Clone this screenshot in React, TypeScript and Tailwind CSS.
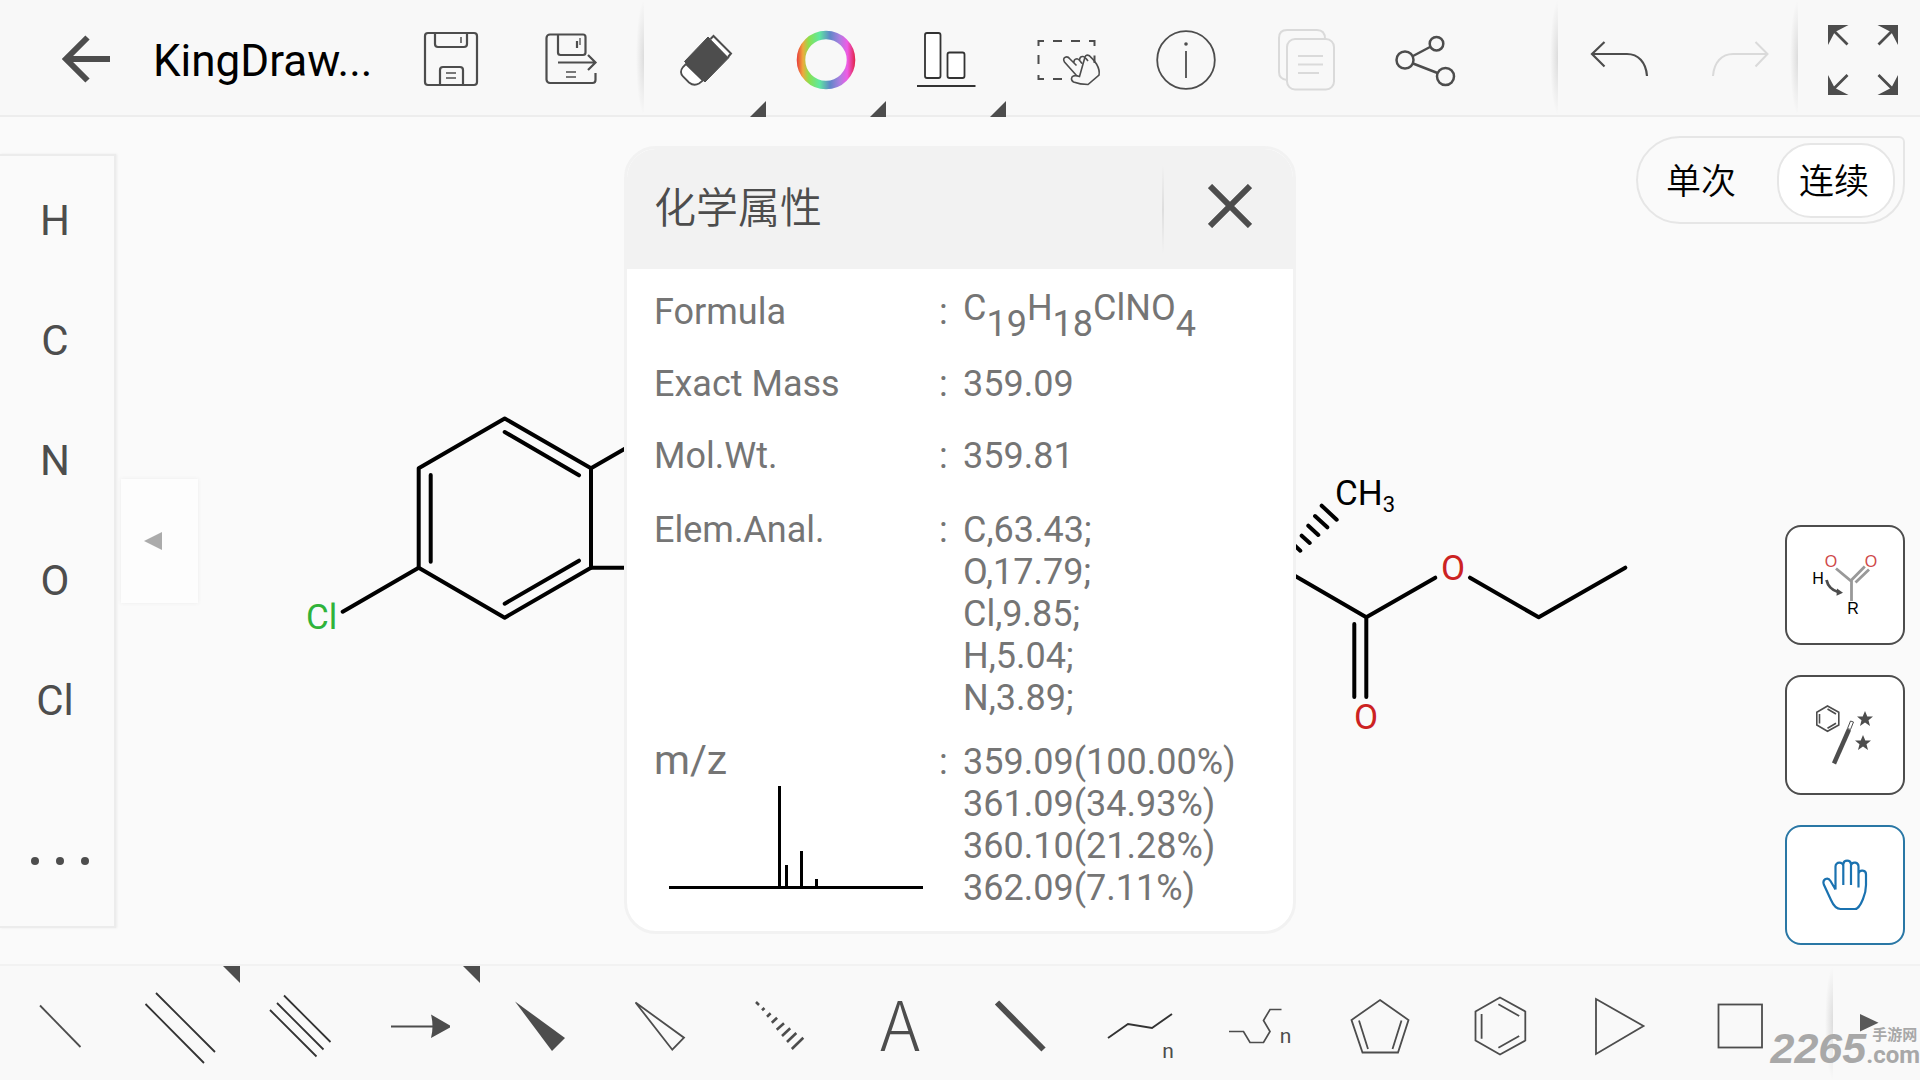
import type { ReactNode } from 'react';

type Tool = { id: string; label: string; icon: ReactNode; more?: boolean; disabled?: boolean };

const elements = ['H', 'C', 'N', 'O', 'Cl'];
const elemAnal = ['C,63.43;', 'O,17.79;', 'Cl,9.85;', 'H,5.04;', 'N,3.89;'];
const mzValues = ['359.09(100.00%)', '361.09(34.93%)', '360.10(21.28%)', '362.09(7.11%)'];

const star = '0,-8 2.3,-2.5 8,-2.5 3.5,1.2 5,7 0,3.500 -5,7 -3.5,1.2 -8,-2.5 -2.3,-2.5';

const fileTools: Tool[] = [
  {
    id: 'save', label: 'Save', icon: (
      <g strokeWidth="2.2">
        <rect x="35" y="33" width="52" height="52" rx="3" />
        <path d="M45 33v11a3 3 0 0 0 3 3h26a3 3 0 0 0 3-3V33M50 85V70a3 3 0 0 1 3-3h17a3 3 0 0 1 3 3v15" />
        <path d="M71 37v6M56 73h10M56 78h10" strokeWidth="1.5" />
      </g>
    ),
  },
  {
    id: 'save-as', label: 'Save as', icon: (
      <g strokeWidth="2.2">
        <path d="M85.500 73v7a3 3 0 0 1-3 3H40a3.500 3.500 0 0 1-3.500-3.500V38a3.500 3.500 0 0 1 3.500-3.500h33a2.500 2.500 0 0 1 2.500 2.500v15.500a2.500 2.500 0 0 1-2.500 2.500H50.500a2.500 2.500 0 0 1-2.500-2.500V34.500" />
        <path d="M48 62.500h37M78 55l7.500 7.500-7.500 7.500M67 41v7" />
        <path d="M70 38v7M56 72h10M56 77h10" strokeWidth="1.3" />
      </g>
    ),
  },
];

const editTools: Tool[] = [
  {
    id: 'eraser', label: 'Eraser', more: true, icon: (
      <g>
        <path d="M62 37l21 20.500-24 24.500-20.500-20.500z" fill="currentColor" />
        <path d="M64.500 39l3-3L85 53.500l-3 3.500" strokeWidth="2" fill="#fff" />
        <path d="M40 64l-3 3q-4 5 0 9.500l6 6q5 4 10 1l4-3z" strokeWidth="1.8" fill="#fff" />
      </g>
    ),
  },
  {
    id: 'color', label: 'Color', more: true, icon: (
      <g>
        <defs>
          <linearGradient id="wheel" gradientUnits="userSpaceOnUse" x1="31" y1="0" x2="90" y2="0">
            <stop offset="0" stopColor="#e8413c" />
            <stop offset=".1" stopColor="#f0a83c" />
            <stop offset=".2" stopColor="#8be04e" />
            <stop offset=".38" stopColor="#5fe8a0" />
            <stop offset=".56" stopColor="#5f86c8" />
            <stop offset=".72" stopColor="#a97fe0" />
            <stop offset=".85" stopColor="#ef5ce6" />
            <stop offset="1" stopColor="#e02038" />
          </linearGradient>
        </defs>
        <circle cx="60" cy="60" r="25" stroke="url(#wheel)" strokeWidth="8.600" />
      </g>
    ),
  },
  {
    id: 'align', label: 'Align', more: true, icon: (
      <g stroke="#333" strokeWidth="1.8" fill="#fff">
        <rect x="39" y="33" width="15.500" height="45" rx="2" />
        <rect x="61.500" y="52.500" width="17" height="25.500" rx="2" />
        <path d="M31 86h58.500" strokeWidth="2" />
      </g>
    ),
  },
  {
    id: 'select', label: 'Select', icon: (
      <g strokeWidth="2">
        <path d="M32.500 46v-5H38M47 41h9M65 41h9M83 41h5.500v5M32.500 55v9M32.500 75v4H38M47 79h9M88.500 55.500V63" />
        <path d="M70.500 75.500L58.500 62q-2-3.500 .8-4.800 2.500-1 4.700 1.800l6.500 6.500M68 63q-.5-4 3-4.300 2 .2 5 5M73.500 60q.5-4 3.500-3.500 2 .3 5 4.500M79 57q1-3 4.500-1.200 4.500 4 7 8.200 3.500 6 2.500 11L82 84.500q-8 0-14.500-2.500-3-2-1.500-5 2-2.500 7.500-.5z" strokeWidth="1.600" />
      </g>
    ),
  },
  {
    id: 'info', label: 'Properties', icon: (
      <g strokeWidth="1.800">
        <circle cx="60" cy="60" r="28.800" />
        <circle cx="60" cy="44" r="1.800" fill="currentColor" stroke="none" />
        <path d="M60 51v27" />
      </g>
    ),
  },
  {
    id: 'copy', label: 'Copy', disabled: true, icon: (
      <g strokeWidth="2">
        <path d="M41 80q-8-1-8-8V38q0-8 8-8h30q8 0 8 9" />
        <rect x="41" y="39" width="47" height="50.500" rx="8" />
        <path d="M52 56h25M52 64.500h25M52 73h21" />
      </g>
    ),
  },
  {
    id: 'share', label: 'Share', icon: (
      <g strokeWidth="2.500">
        <circle cx="39" cy="60" r="8.500" />
        <circle cx="70.500" cy="43.700" r="6.800" />
        <circle cx="79.500" cy="76.500" r="8.500" />
        <path d="M47 56l17-9M47 63.500l24.500 9.500" />
      </g>
    ),
  },
];

const historyTools: Tool[] = [
  { id: 'undo', label: 'Undo', icon: <path d="M87 76C86 62 78 54 67 54H32M44.500 42L32 54l12.500 12.500" strokeWidth="2.200" /> },
  { id: 'redo', label: 'Redo', disabled: true, icon: <path d="M33 76C34 62 42 54 53 54h34.500M75.500 42l12 12-12 12.500" strokeWidth="2" /> },
  {
    id: 'fullscreen', label: 'Full screen', icon: (
      <g strokeWidth="2.800">
        <path d="M34 31l13.500 13.500M92 31L78.500 44.500M34 88.500L47.500 75M92 88.500L78.500 75" />
        <path d="M28 25h20.500L36 31.500l-2 2L28 45zM98 25H77.500L90 31.500l2 2L98 45zM28 95h20.500L36 88.500l-2-2L28 75zM98 95H77.500L90 88.500l2-2L98 75z" fill="currentColor" stroke="none" />
      </g>
    ),
  },
];

const bondTools: Tool[] = [
  { id: 'single', label: 'Single bond', icon: <path d="M40 41.500l40.500 41.500" strokeWidth="1.800" /> },
  { id: 'double', label: 'Double bond', more: true, icon: <path d="M36 29l59 59M25.500 40L84 99" strokeWidth="1.800" stroke="#333" /> },
  { id: 'triple', label: 'Triple bond', icon: <path d="M44 31.500L90.500 78M37 39l46.500 46.500M30 46l46.500 46.500" strokeWidth="1.800" stroke="#333" /> },
  {
    id: 'arrow', label: 'Arrow', more: true, icon: (
      <g>
        <path d="M31 62.500h44" strokeWidth="2" />
        <path d="M71 50.500l19 11v2l-19 10.500q3-12 0-23.500z" fill="currentColor" />
      </g>
    ),
  },
  { id: 'wedge', label: 'Wedge bond', icon: <path d="M35 37.500l50 36.500-13 13z" fill="currentColor" /> },
  { id: 'hollow', label: 'Hollow wedge bond', icon: <path d="M35.500 38.500L84 73.700 72.300 85.700z" strokeWidth="1.800" /> },
  {
    id: 'hash', label: 'Hashed bond', icon: (
      <path d="M36 38l3 3M42 46.300l2.500-2.300M47 52.700l3.600-3.400M51.800 58.700l5.300-5M56.700 65.700l7.300-6.400M62 72l8.200-7.700M67 78l9.300-9M71.800 85l11.500-11.300" strokeWidth="2.600" />
    ),
  },
  {
    id: 'text', label: 'Text', icon: (
      <text x="60" y="87" textAnchor="middle" fontSize="68" fill="#4d4d4d" className="font-['Noto_Sans_CJK_SC',sans-serif] font-light">A</text>
    ),
  },
  { id: 'bold', label: 'Bold bond', icon: <path d="M37 38.500l46.500 47" strokeWidth="6" /> },
  {
    id: 'chain', label: 'Chain', icon: (
      <g>
        <path d="M28 74l20-14 24 4 20-14" strokeWidth="1.900" stroke="#333" />
        <text x="88" y="94" textAnchor="middle" fontSize="21" fill="currentColor">n</text>
      </g>
    ),
  },
  {
    id: 'polymer', label: 'Polymer chain', icon: (
      <g>
        <path d="M29 67.500h14.500L50 78.500h13.500L70 67.500l-6.500-11L70 45.500h11.500" strokeWidth="1.700" />
        <text x="85.500" y="79" textAnchor="middle" fontSize="21" fill="currentColor">n</text>
      </g>
    ),
  },
  { id: 'penta', label: 'Cyclopentadiene', icon: <path d="M60 36l28.500 20-10.500 32.500H42.500L31.500 56zM39 56.500l9 28.500M81.500 56.500l-9 28.500" strokeWidth="1.800" /> },
  { id: 'benzene', label: 'Benzene', icon: <path d="M60 33.500l25.300 14v29L60 90.500l-24.500-14v-29zM41.600 50v24.700M58.400 40.300L79.200 52M79.200 72L58.400 83.700" strokeWidth="1.800" /> },
  { id: 'triangle', label: 'Cyclopropane', icon: <path d="M36 35l47.500 27L36 90z" strokeWidth="1.800" /> },
  { id: 'square', label: 'Cyclobutane', icon: <rect x="38.500" y="40.500" width="43.500" height="43" strokeWidth="1.800" /> },
];

function Divider() {
  return (
    <span className="relative w-0">
      <span className="absolute inset-y-0 right-0.5 w-2 bg-[radial-gradient(ellipse_at_right,#dcdcdc,transparent_70%)]" />
    </span>
  );
}

function TopButton({ tool }: { tool: Tool }) {
  return (
    <button type="button" aria-label={tool.label} disabled={tool.disabled}
      className="h-[115px] w-[120px] shrink-0 text-[#4d4d4d] disabled:text-[#dadada]">
      <svg viewBox="0 0 120 115" fill="none" stroke="currentColor" className="h-full w-full overflow-visible">
        {tool.icon}
        {tool.more && <path d="M120 101v16h-16z" fill="currentColor" stroke="none" />}
      </svg>
    </button>
  );
}

function BondButton({ tool }: { tool: Tool }) {
  return (
    <button type="button" aria-label={tool.label} className="h-[114px] w-[120px] shrink-0 text-[#4d4d4d]">
      <svg viewBox="0 2 120 114" className="h-full w-full">
        <g fill="none" stroke="currentColor" className="[&_path[fill=currentColor]]:stroke-none [&_text]:stroke-none">{tool.icon}</g>
        {tool.more && <path d="M103 2h17v17z" fill="currentColor" />}
      </svg>
    </button>
  );
}

function Molecule() {
  return (
    <svg viewBox="0 117 1920 847" className="absolute inset-0 h-full w-full" aria-label="Molecule">
      <g fill="none" stroke="#000" strokeWidth="4" strokeLinecap="round" strokeLinejoin="round">
        <path d="M504.700 418.500L591 468.300v99.400l-86.300 50-86-50v-99.400z" />
        <path d="M504.700 432L579 475.300M579 560.700l-74.300 43M430.700 475v86.700" />
        <path d="M591 468.300L640 440M591 567.700h49M418.700 567.700l-76 44" />
        <path d="M1284 569.500l82.300 47.800 69-39.600M1366.300 617.300V697M1354.300 624v73" />
        <path d="M1470 577.700l68.700 39.600 86.600-49.600" />
        <path d="M1321.700 505.700l15 14M1315 516l12.300 11.300M1308.300 525.700l10 9.300M1301.700 535.700l8 7.300M1295 545.700l5.300 5" />
      </g>
      <g fontSize="35">
        <text x="306" y="629" fill="#2fb33a">Cl</text>
        <text x="1453" y="580" fill="#cc2222" textAnchor="middle">O</text>
        <text x="1366" y="729" fill="#cc2222" textAnchor="middle">O</text>
        <text x="1335" y="505">CH<tspan fontSize="22" dy="7">3</tspan></text>
      </g>
    </svg>
  );
}

function Row({ label, children }: { label: ReactNode; children: ReactNode }) {
  return (
    <div className="grid grid-cols-[285px_24px_1fr]">
      <dt>{label}</dt>
      <span>:</span>
      {children}
    </div>
  );
}

function PropertiesDialog() {
  return (
    <div className="absolute inset-0 flex items-center justify-center pb-0.5">
      <section role="dialog" aria-labelledby="dialog-title"
        className="w-[672px] max-w-full overflow-hidden rounded-[32px] border-[3px] border-[#f2f2f2] bg-white">
        <header className="flex h-[120px] items-center bg-[#f2f2f2] pl-[27px]">
          <h2 id="dialog-title" className="flex-1 text-[42px] leading-[60px] font-[350] text-[#4d4d4d]">化学属性</h2>
          <span className="h-[88px] w-0.5 bg-linear-to-b from-transparent via-[#dedede] to-transparent" />
          <button type="button" aria-label="Close" className="flex h-full w-[129px] items-center justify-center pb-1.5 pl-0.5 text-[#4d4d4d]">
            <svg viewBox="0 0 44 44" className="size-11">
              <path d="M2 2l40 40M42 2L2 42" stroke="currentColor" strokeWidth="6" />
            </svg>
          </button>
        </header>
        <dl className="flex flex-col px-[27px] py-[22px] text-[36px] leading-[42px] text-[#757575]">
          <div className="flex flex-col gap-[30px] pb-8">
            <Row label="Formula">
              <dd className="leading-[34px] whitespace-nowrap [&_sub]:-bottom-4 [&_sub]:text-[36px]">
                C<sub>19</sub>H<sub>18</sub>ClNO<sub>4</sub>
              </dd>
            </Row>
            <Row label="Exact Mass"><dd>359.09</dd></Row>
            <Row label="Mol.Wt."><dd>359.81</dd></Row>
          </div>
          <div className="flex flex-col gap-[22px]">
            <Row label="Elem.Anal.">
              <dd>{elemAnal.map(v => <p key={v}>{v}</p>)}</dd>
            </Row>
            <Row
              label={
                <>
                  <p className="pb-1 text-[41px] leading-[38px]">m/z</p>
                  <svg viewBox="0 0 280 108" className="w-[280px]" aria-label="Mass spectrum">
                    <path d="M15 104.500h254M125.500 3v101M132.500 82v22M147.500 68v36M162.500 96v8" stroke="#000" strokeWidth="3" />
                  </svg>
                </>
              }
            >
              <dd>{mzValues.map(v => <p key={v}>{v}</p>)}</dd>
            </Row>
          </div>
        </dl>
      </section>
    </div>
  );
}

function SideTools() {
  const box = 'size-[120px] rounded-2xl border-2 bg-white';
  return (
    <div className="flex flex-col gap-[30px]">
      <button type="button" aria-label="Reaction" className={`${box} border-[#4d4d4d] text-[#4d4d4d]`}>
        <svg viewBox="2 2 116 116" className="h-full w-full font-['Liberation_Sans',sans-serif]">
          <path d="M51 43.500l15.500 13v19.500M66 55.500l13.800-14M70.500 57.500l13.500-13" fill="none" stroke="#999" strokeWidth="2.800" />
          <path d="M41.500 55q2 9 11.500 12" fill="none" stroke="currentColor" strokeWidth="2.800" />
          <path d="M52 63.500l6 4.200-6.500 3z" fill="currentColor" />
          <g fontSize="16" textAnchor="middle">
            <text x="46" y="42" fill="#cf4a4a">O</text>
            <text x="86" y="42" fill="#cf4a4a">O</text>
            <text x="33" y="59" fill="#000">H</text>
            <text x="68" y="89" fill="#000">R</text>
          </g>
        </svg>
      </button>
      <button type="button" aria-label="Magic wand" className={`${box} border-[#4d4d4d] text-[#4d4d4d]`}>
        <svg viewBox="2 2 116 116" className="h-full w-full">
          <path d="M42.500 31l11.300 6.300V50l-11.300 6.300L31.800 50V37.300zM34.500 39v9.500M42.500 34l8.500 5M42.500 53.300l8.500-5" fill="none" stroke="currentColor" strokeWidth="1.600" />
          <path d="M49 88.500l15-34" stroke="currentColor" strokeWidth="4.500" />
          <path d="M62.500 53.500l3-7.500 3 1-3 7.500z" fill="#fff" stroke="currentColor" strokeWidth="1" />
          <polygon points={star} transform="translate(80 44)" fill="currentColor" />
          <polygon points={star} transform="translate(78 68)" fill="currentColor" />
        </svg>
      </button>
      <button type="button" aria-label="Move" aria-pressed="true" className={`${box} border-[#2a77a5] text-[#1a72b0]`}>
        <svg viewBox="2 2 116 116" className="h-full w-full">
          <path d="M50.500 64.500L45.500 56q-2-3.500-5-2-3 1.800-1.700 5.500L46 75q4 9 9.500 9H70q4 0 8-10 3-7 3-14V49.500a3.800 3.800 0 0 0-7.500-1V62.500M58.300 60V41.500a3.900 3.900 0 0 0-7.800 0v23M66 60V39a3.900 3.900 0 0 0-7.700 0v2.500M73.500 62V41.500A3.900 3.900 0 0 0 66 40" fill="none" stroke="currentColor" strokeWidth="2.200" strokeLinejoin="round" />
        </svg>
      </button>
    </div>
  );
}

export default function App() {
  return (
    <div className="flex min-h-screen flex-col overflow-hidden bg-[#fafafa] font-['Roboto','Noto_Sans_CJK_SC',sans-serif] text-black">
      {/* Top toolbar */}
      <header className="flex border-b-2 border-[#ededed] bg-[#f8f8f8]">
        <button type="button" aria-label="Back" className="h-[115px] w-[140px] shrink-0 text-[#4d4d4d]">
          <svg viewBox="0 0 140 115" fill="none" stroke="currentColor" strokeWidth="6" className="h-full w-full">
            <path d="M110 59H66M87.500 37.500L66 59l21.500 21.500" />
          </svg>
        </button>
        <h1 className="flex w-[250px] shrink-0 items-center pt-1.5 pl-[13px] text-[44px] leading-[60px]">KingDraw...</h1>
        {fileTools.map(t => <TopButton key={t.id} tool={t} />)}
        <span className="w-4" />
        <Divider />
        {editTools.map(t => <TopButton key={t.id} tool={t} />)}
        <span className="flex-1" />
        <Divider />
        {historyTools.slice(0, 2).map(t => <TopButton key={t.id} tool={t} />)}
        <Divider />
        <TopButton tool={historyTools[2]} />
      </header>

      {/* Canvas */}
      <main className="relative flex flex-1 items-center">
        <Molecule />

        <aside className="relative flex h-[774px] w-[116px] flex-col border-y-2 border-r-2 border-[#ececec] bg-[#fafafa] pt-[5px] text-[42px] text-[#4d4d4d] shadow-[1px_0_2px_#ececec]">
          {elements.map(el => (
            <button key={el} type="button" className="h-[120px] pr-1">{el}</button>
          ))}
          <button type="button" aria-label="More elements" className="mt-auto flex h-[130px] items-center justify-center gap-[17px] pl-1.5">
            <span className="size-2 rounded-full bg-[#4d4d4d]" />
            <span className="size-2 rounded-full bg-[#4d4d4d]" />
            <span className="size-2 rounded-full bg-[#4d4d4d]" />
          </button>
        </aside>
        <button type="button" aria-label="Collapse panel"
          className="relative ml-[5px] flex h-[124px] w-[77px] items-center bg-[#fdfdfd] pl-[23px] shadow-[0_0_4px_#ececec]">
          <svg viewBox="0 0 18 18" className="size-[18px]"><path d="M0 9L18 0v18z" fill="#ababab" /></svg>
        </button>

        <div className="relative ml-auto flex flex-col items-end justify-between self-stretch py-[19px] pr-[15px]">
          <div className="flex h-[88px] items-center rounded-l-[44px] rounded-tr-md rounded-br-[40px] border-2 border-[#e6e6e6] pr-2 pl-7 text-[35px] font-[350]">
            <button type="button" className="w-[111px] pt-1.5 text-left">单次</button>
            <button type="button" aria-pressed="true" className="h-[75px] w-[118px] rounded-[34px] border-2 border-[#e6e6e6] bg-white pt-1.5 pr-1">连续</button>
          </div>
          <SideTools />
        </div>

        <PropertiesDialog />
      </main>

      {/* Bond and ring toolbar */}
      <footer className="relative flex border-t-2 border-[#f2f2f2] bg-[#f9f9f9]">
        {bondTools.map(t => <BondButton key={t.id} tool={t} />)}
        <span className="flex-1" />
        <Divider />
        <button type="button" aria-label="Next" className="h-[114px] w-[85px] shrink-0 text-[#595959]">
          <svg viewBox="0 2 85 114" className="h-full w-full"><path d="M25 50l18.500 8.700L25 67.500z" fill="currentColor" /></svg>
        </button>
        <div className="absolute right-0 bottom-3 flex items-end font-bold text-[#a8a8a8]">
          <span className="font-['Liberation_Sans',sans-serif] text-[43px] leading-[40px] italic">2265</span>
          <span className="flex flex-col">
            <span className="pl-1.5 text-[15px] leading-[14px]">手游网</span>
            <span className="text-[24px] leading-[26px]">.com</span>
          </span>
        </div>
      </footer>
    </div>
  );
}
